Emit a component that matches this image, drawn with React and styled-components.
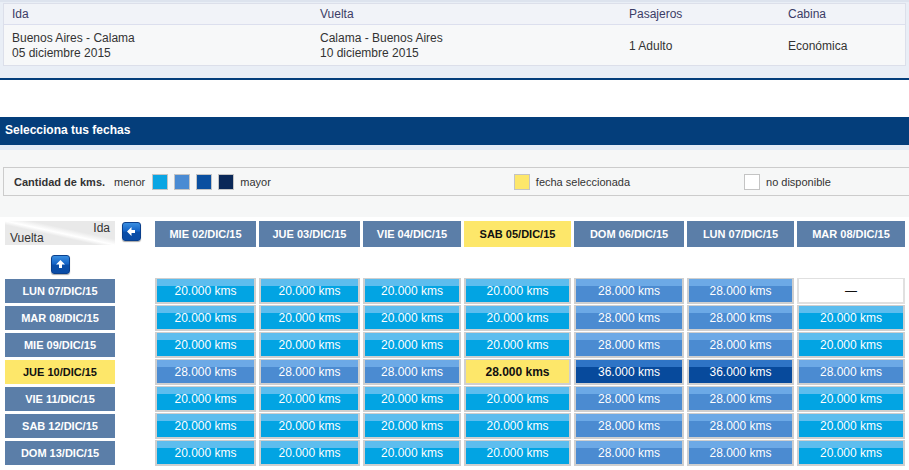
import React from "react"
import styled, { createGlobalStyle } from "styled-components"

const GlobalStyle = createGlobalStyle`
    body{
        margin: 0;
        background: #fff;
        font-family: "Liberation Sans", Arial, sans-serif;
        color: #333;
    }
`

const Page = styled.div`
    width: 909px;
    overflow: hidden;
`

const Summary = styled.div`
    background: #e9eef6;
    border-top: 2px solid #dde3ee;
    padding: 1px 3px 12px 3px;
`

const SummaryTable = styled.div`
    border: 1px solid #dcdfea;
    background: #f7f8f9;
`

const SummaryRow = styled.div`
    display: grid;
    grid-template-columns: 308px 309px 159px 1fr;
    padding-left: 8px;
    font-size: 12px;
    line-height: 15px;
    align-items: center;
    ${p => p.$head ? `
        background: #f1f3f8;
        color: #3b3c66;
        height: 20px;
        border-bottom: 1px solid #dcdfee;
    ` : `
        color: #333;
        height: 40px;
        padding-top: 2px;
        box-sizing: border-box;
    `}
`

const Rule = styled.div`
    height: 2px;
    background: #043e7b;
`

const Spacer = styled.div`
    height: 37px;
`

const Title = styled.div`
    background: #043e7b;
    color: #fff;
    font-weight: bold;
    font-size: 12px;
    height: 28px;
    line-height: 26px;
    padding-left: 5px;
    border-bottom: 5px solid #e4ebf6;
`

const LegendPanel = styled.div`
    background: #f6f7f7;
    padding: 17px 0 21px 3px;
`

const LegendBox = styled.div`
    display: flex;
    align-items: center;
    height: 27px;
    border: 1px solid #cccccc;
    border-right: none;
    font-size: 11px;
    color: #333;
    padding-left: 10px;
`

const LegendTitle = styled.span`
    font-weight: bold;
    margin-right: 9px;
`

const LegendWord = styled.span`
    margin-right: ${p => p.$gap || 0}px;
`

const Swatch = styled.span`
    width: 14px;
    height: 14px;
    border: 1px solid #c4c4c4;
    background: ${p => p.$color};
    margin-right: 6px;
    flex: none;
`

const LegendGroup = styled.div`
    display: flex;
    align-items: center;
    margin-left: ${p => p.$offset}px;
`

const Matrix = styled.div`
    display: grid;
    grid-template-columns: 110px 34px 101px 101px 98px 107px 110px 107px 108px;
    grid-template-rows: 26px 26px repeat(8, 24px);
    gap: 3px;
    padding: 4px 0 0 5px;
`

const Corner = styled.div`
    height: 24px;
    position: relative;
    background: linear-gradient(to top right, #e9e9e9 42%, #ffffff 50%, #e9e9e9 62%);
    font-size: 12px;
    color: #333;
`

const CornerLabel = styled.span`
    position: absolute;
    ${p => p.$top ? "top: 0; right: 5px;" : "bottom: 0; left: 5px;"}
`

const NavButton = styled.button`
    width: 19px;
    height: 19px;
    padding: 0;
    border: 1px solid #0a3f8c;
    border-radius: 3px;
    background: linear-gradient(#3a8ee0 0%, #1565c8 45%, #0a4ea8 55%, #0a4ca6 100%);
    box-shadow: 0 1px 1px rgba(0,0,0,0.35);
    display: flex;
    align-items: center;
    justify-content: center;
    margin: ${p => p.$margin};
    cursor: pointer;
`

const NavCell = styled.div`
    display: flex;
    justify-content: ${p => p.$center ? "center" : "flex-start"};
    align-items: flex-start;
`

const DateHead = styled.div`
    background: ${p => p.$selected ? "#fde76a" : "#5b7ea8"};
    color: ${p => p.$selected ? "#111" : "#fff"};
    font-weight: bold;
    font-size: 11px;
    display: flex;
    align-items: center;
    justify-content: center;
    height: ${p => p.$tall ? "26px" : "24px"};
`

const fills = {
    20: ["#5dbdee", "#02a4e3"],
    28: ["#6ca9e6", "#4b8bd1"],
    36: ["#2e74c6", "#074a9c"],
}

const Cell = styled.div`
    border: 2px solid ${p => p.$empty ? "#e0e0e0" : "#cfcfcf"};
    border-top-width: 1px;
    box-sizing: border-box;
    height: 26px;
    margin-top: -1px;
    display: flex;
    align-items: center;
    justify-content: center;
    font-size: 12px;
    color: ${p => p.$selected || p.$empty ? "#111" : "#fff"};
    font-weight: ${p => p.$selected ? "bold" : "normal"};
    background: ${p => p.$empty ? "#fff"
        : p.$selected ? "#fde76a"
        : `linear-gradient(${fills[p.$kms][0]} 0 7px, ${fills[p.$kms][1]} 7px 100%)`};
`

const Arrow = ({ dir }) =>
    <svg width="11" height="11" viewBox="0 0 11 11"
        style={{ transform: dir === "up" ? "rotate(90deg)" : dir === "down" ? "rotate(-90deg)" : "none" }}>
        <path d="M1 5.5 L5.5 1 L5.5 4 L9 4 L9 7 L5.5 7 L5.5 10 Z" fill="#fff"/>
    </svg>

const idaDates = ["MIE 02/DIC/15", "JUE 03/DIC/15", "VIE 04/DIC/15", "SAB 05/DIC/15", "DOM 06/DIC/15", "LUN 07/DIC/15", "MAR 08/DIC/15"]

const rows = [
    { date: "LUN 07/DIC/15", kms: [20, 20, 20, 20, 28, 28, null] },
    { date: "MAR 08/DIC/15", kms: [20, 20, 20, 20, 28, 28, 20] },
    { date: "MIE 09/DIC/15", kms: [20, 20, 20, 20, 28, 28, 20] },
    { date: "JUE 10/DIC/15", kms: [28, 28, 28, 28, 36, 36, 28], selected: true },
    { date: "VIE 11/DIC/15", kms: [20, 20, 20, 20, 28, 28, 20] },
    { date: "SAB 12/DIC/15", kms: [20, 20, 20, 20, 28, 28, 20] },
    { date: "DOM 13/DIC/15", kms: [20, 20, 20, 20, 28, 28, 20] },
]

const SELECTED_COL = 3

const App = () =>
    <Page>
        <GlobalStyle/>
        <Summary>
            <SummaryTable>
                <SummaryRow $head>
                    <span>Ida</span>
                    <span>Vuelta</span>
                    <span>Pasajeros</span>
                    <span>Cabina</span>
                </SummaryRow>
                <SummaryRow>
                    <span>Buenos Aires - Calama<br/>05 diciembre 2015</span>
                    <span>Calama - Buenos Aires<br/>10 diciembre 2015</span>
                    <span>1 Adulto</span>
                    <span>Económica</span>
                </SummaryRow>
            </SummaryTable>
        </Summary>
        <Rule/>
        <Spacer/>
        <Title>Selecciona tus fechas</Title>
        <LegendPanel>
            <LegendBox>
                <LegendTitle>Cantidad de kms.</LegendTitle>
                <LegendWord $gap={7}>menor</LegendWord>
                <Swatch $color="#0aa5e3"/>
                <Swatch $color="#4a8bd3"/>
                <Swatch $color="#0a4fa0"/>
                <Swatch $color="#0a2858"/>
                <LegendWord>mayor</LegendWord>
                <LegendGroup $offset={243}>
                    <Swatch $color="#fde76a"/>
                    <LegendWord>fecha seleccionada</LegendWord>
                </LegendGroup>
                <LegendGroup $offset={114}>
                    <Swatch $color="#ffffff"/>
                    <LegendWord>no disponible</LegendWord>
                </LegendGroup>
            </LegendBox>
        </LegendPanel>
        <Matrix>
            <Corner>
                <CornerLabel $top>Ida</CornerLabel>
                <CornerLabel>Vuelta</CornerLabel>
            </Corner>
            <NavCell>
                <NavButton $margin="1px 0 0 4px"><Arrow dir="left"/></NavButton>
            </NavCell>
            {idaDates.map((d, i) =>
                <DateHead key={d} $tall $selected={i === SELECTED_COL}>{d}</DateHead>
            )}

            <NavCell $center>
                <NavButton $margin="5px 0 0 0"><Arrow dir="up"/></NavButton>
            </NavCell>
            <div style={{ gridColumn: "2 / -1" }}/>

            {rows.map(r =>
                <React.Fragment key={r.date}>
                    <DateHead $selected={r.selected}>{r.date}</DateHead>
                    <div/>
                    {r.kms.map((k, i) =>
                        k === null
                            ? <Cell key={i} $empty>—</Cell>
                            : <Cell key={i} $kms={k} $selected={r.selected && i === SELECTED_COL}>
                                {k}.000 kms
                            </Cell>
                    )}
                </React.Fragment>
            )}

            <NavCell $center>
                <NavButton $margin="2px 0 0 0"><Arrow dir="down"/></NavButton>
            </NavCell>
        </Matrix>
    </Page>

export default App
